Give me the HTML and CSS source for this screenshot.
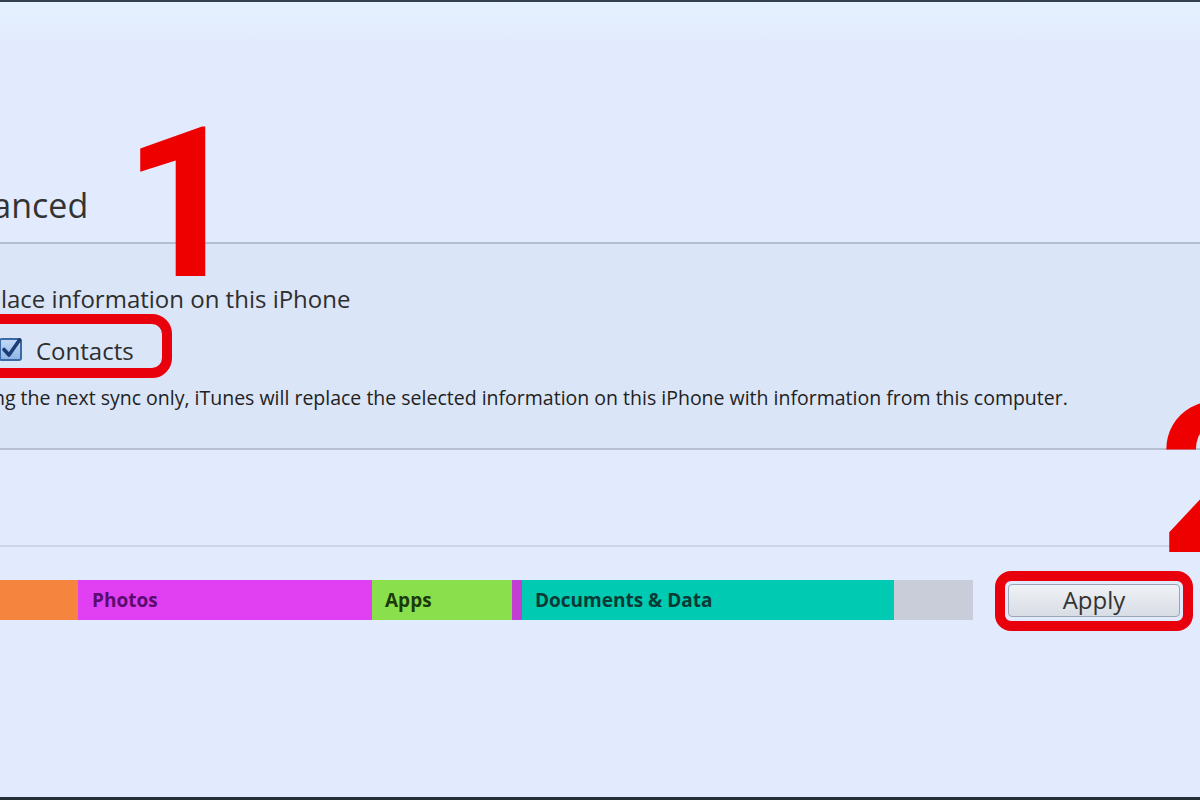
FILE: index.html
```html
<!DOCTYPE html>
<html lang="en">
<head>
    <meta charset="UTF-8">
    <meta name="viewport" content="width=device-width, initial-scale=1.0">
    <title>iTunes - Advanced</title>
    <link rel="stylesheet" href="styles.css">
</head>
<body>

<div class="page">

    <!-- หัวข้อ -->
    <div class="header">
        <h1 class="title">Advanced</h1>
    </div>

    <!-- ส่วนแทนที่ข้อมูล -->
    <div class="replace">
        <p class="replace-title">Replace information on this iPhone</p>
        <label class="check-row">
            <svg class="checkbox" width="24" height="24" viewBox="0 0 24 24">
                <defs>
                    <linearGradient id="boxFill" x1="0" y1="0" x2="0" y2="1">
                        <stop offset="0" stop-color="#c4dbf7"/>
                        <stop offset="1" stop-color="#8db3e4"/>
                    </linearGradient>
                </defs>
                <rect x="1" y="2" width="21" height="21" rx="2" fill="url(#boxFill)" stroke="#3a6aa3" stroke-width="2"/>
                <path d="M5 12.5 L10 18 L20.5 3" fill="none" stroke="#1b3c74" stroke-width="3.6" stroke-linecap="round" stroke-linejoin="round"/>
            </svg>
            <span>Contacts</span>
        </label>
        <p class="note">During the next sync only, iTunes will replace the selected information on this iPhone with information from this computer.</p>
    </div>

    <div class="spacer"></div>

    <!-- แถบความจุ -->
    <div class="storage">
        <div class="bar">
            <div class="seg seg-audio"></div>
            <div class="seg seg-photos">Photos</div>
            <div class="seg seg-apps">Apps</div>
            <div class="seg seg-books"></div>
            <div class="seg seg-docs">Documents &amp; Data</div>
            <div class="seg seg-free"></div>
        </div>
        <button class="apply">Apply</button>
    </div>

    <!-- เครื่องหมายกำกับ -->
    <div class="mark mark-1">1</div>
    <div class="mark mark-2">2</div>
    <div class="ring ring-contacts"></div>
    <div class="ring ring-apply"></div>

</div>

</body>
</html>
```

FILE: styles.css
```css
body {
    margin: 0;
    background-color: #e2ebfd;
    font-family: "Open Sans", "Noto Sans", sans-serif;
    overflow: hidden;
}

.page {
    position: relative;
    height: 800px;
    box-sizing: border-box;
    border-top: 2px solid #34404c;
    border-bottom: 3px solid #262e37;
    background: linear-gradient(#e4f1fe, #e2ebfd 40px);
    overflow: hidden;
}

.header {
    height: 240px;
    display: flex;
    align-items: flex-end;
    border-bottom: 2px solid #b3bfcf;
}

.title {
    margin: 0 0 20px -67px;
    font-size: 34px;
    line-height: 34px;
    font-weight: 400;
    color: #333;
}

.replace {
    height: 206px;
    box-sizing: border-box;
    padding-top: 39px;
    background-color: #dae5f7;
    border-bottom: 2px solid #b5c1d3;
}

.replace-title {
    margin: 0 0 0 -42px;
    font-size: 24px;
    line-height: 32px;
    color: #2e2e2e;
}

.check-row {
    display: flex;
    align-items: flex-start;
    gap: 13px;
    margin-top: 20px;
    margin-left: -1px;
    font-size: 24px;
    line-height: 32px;
    color: #2e2e2e;
}

.checkbox {
    margin-top: 2px;
}

.note {
    margin: 18px 0 0 -46px;
    font-size: 19.5px;
    line-height: 26px;
    color: #222;
    white-space: nowrap;
}

.spacer {
    height: 95px;
    border-bottom: 2px solid #cbd5e6;
}

.storage {
    display: flex;
    align-items: center;
    padding-top: 33px;
}

.bar {
    display: flex;
    height: 40px;
    width: 973px;
}

.seg {
    box-sizing: border-box;
    padding-left: 13px;
    font-size: 19px;
    font-weight: 700;
    line-height: 40px;
    white-space: nowrap;
}

.seg-audio  { width: 78px;  background-color: #f4843e; }
.seg-photos { width: 294px; background-color: #e040f2; color: #5a0c6c; padding-left: 14px; }
.seg-apps   { width: 140px; background-color: #8ae04c; color: #1c3b0c; }
.seg-books  { width: 10px;  background-color: #c23ed2; padding: 0; }
.seg-docs   { width: 372px; background-color: #00cab2; color: #0a3a35; }
.seg-free   { width: 79px;  background-color: #c8cdd9; }

.apply {
    margin-left: 35px;
    width: 172px;
    height: 33px;
    padding: 0;
    font-family: "Open Sans", "Noto Sans", sans-serif;
    font-size: 24px;
    line-height: 30px;
    color: #333;
    background: linear-gradient(#eff2f6, #d8dce4);
    border: 1px solid #9ca5b2;
    border-radius: 4px;
}

.mark {
    position: absolute;
    font-family: Roboto, "Liberation Sans", sans-serif;
    font-weight: 700;
    font-size: 210px;
    line-height: 1;
    color: #ee0000;
}

.mark-1 {
    left: 123px;
    top: 97px;
}

.mark-2 {
    left: 1159px;
    top: 373px;
}

.ring {
    position: absolute;
    box-sizing: border-box;
    border: 10px solid #e8000c;
}

.ring-contacts {
    left: -40px;
    top: 312px;
    width: 212px;
    height: 64px;
    border-radius: 20px;
}

.ring-apply {
    left: 995px;
    top: 569px;
    width: 198px;
    height: 60px;
    border-radius: 16px;
}
```
